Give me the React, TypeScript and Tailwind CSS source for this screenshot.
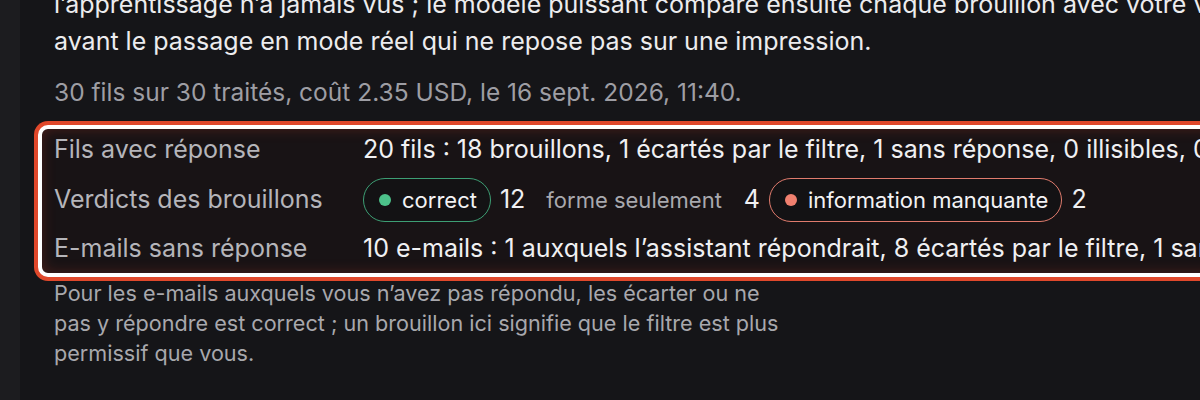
import React from "react";

type Verdict = {
  label: string;
  count: number;
  tone: "good" | "plain" | "bad";
};

const verdicts: Verdict[] = [
  { label: "correct", count: 12, tone: "good" },
  { label: "forme seulement", count: 4, tone: "plain" },
  { label: "information manquante", count: 2, tone: "bad" },
];

function VerdictChip({ verdict }: { verdict: Verdict }) {
  if (verdict.tone === "plain") {
    return (
      <span className="flex items-center">
        <span className="ml-[21px] text-[22px] text-[#a9a9ae]">{verdict.label}</span>
        <span className="mr-[9px] ml-[22px] text-[25px] text-[#f0f0f2]">{verdict.count}</span>
      </span>
    );
  }

  const chipClass = verdict.tone === "good" ? "border-[#3d9e74]" : "border-[#e07b6d]";
  const dotClass = verdict.tone === "good" ? "bg-[#4cc18a]" : "bg-[#f0806f]";

  return (
    <span className="flex items-center">
      <span
        className={`flex h-[44px] items-center gap-[11px] rounded-full border-[1.5px] bg-[#131214] pl-[15px] pr-[13px] text-[22px] text-[#f3f3f5] ${chipClass}`}
      >
        <span className={`h-[12px] w-[12px] rounded-full ${dotClass}`} />
        {verdict.label}
      </span>
      <span className="ml-[9px] text-[25px] text-[#f0f0f2]">{verdict.count}</span>
    </span>
  );
}

export default function App() {
  return (
    <div
      className="flex h-[400px] w-[1200px] overflow-hidden bg-[#151518]"
      style={{ fontFamily: "Inter, 'Noto Sans', sans-serif" }}
    >
      <div className="w-[20px] shrink-0 bg-[#1c1c1f]" />
      <div className="min-w-0 flex-1 pl-[14px]">
        <div className="-mt-[14px] pl-[20px] text-[25px] leading-[37px] whitespace-nowrap text-[#ececee]">
          <p>
            l’apprentissage n’a jamais vus ; le modèle puissant compare ensuite chaque brouillon avec votre vraie réponse, une mesure
          </p>
          <p>avant le passage en mode réel qui ne repose pas sur une impression.</p>
        </div>

        <p className="mt-[16px] pl-[20px] text-[24.5px] leading-[32px] whitespace-nowrap text-[#9e9ea4]">
          30 fils sur 30 traités, coût 2.35 USD, le 16 sept. 2026, 11:40.
        </p>

        <div className="mt-[13px] w-[1400px] rounded-[14px] bg-[#e0482b] p-[4px]">
          <div className="rounded-[10px] border-[4px] border-white bg-[#181315] pt-[3px] pb-[6px] pl-[12px] shadow-[inset_0_0_14px_rgba(200,60,40,0.28)]">
            <div className="flex h-[36px] items-center whitespace-nowrap">
              <span className="w-[309px] shrink-0 text-[25px] text-[#b5b5ba]">Fils avec réponse</span>
              <span className="text-[25px] text-[#f0f0f2]">
                20 fils : 18 brouillons, 1 écartés par le filtre, 1 sans réponse, 0 illisibles, 0 erreurs
              </span>
            </div>
            <div className="mt-[10px] flex h-[44px] items-center whitespace-nowrap">
              <span className="w-[309px] shrink-0 text-[25px] text-[#b5b5ba]">Verdicts des brouillons</span>
              <div className="flex items-center">
                {verdicts.map((verdict) => (
                  <VerdictChip key={verdict.label} verdict={verdict} />
                ))}
              </div>
            </div>
            <div className="mt-[9px] flex h-[36px] items-center whitespace-nowrap">
              <span className="w-[309px] shrink-0 text-[25px] text-[#b5b5ba]">E-mails sans réponse</span>
              <span className="text-[25px] text-[#f0f0f2]">
                10 e-mails : 1 auxquels l’assistant répondrait, 8 écartés par le filtre, 1 sans réponse
              </span>
            </div>
          </div>
        </div>

        <p className="-mt-[3px] pl-[20px] text-[21.6px] leading-[30px] whitespace-nowrap text-[#a8a8ad]">
          Pour les e-mails auxquels vous n’avez pas répondu, les écarter ou ne
          <br />
          pas y répondre est correct ; un brouillon ici signifie que le filtre est plus
          <br />
          permissif que vous.
        </p>
      </div>
    </div>
  );
}
